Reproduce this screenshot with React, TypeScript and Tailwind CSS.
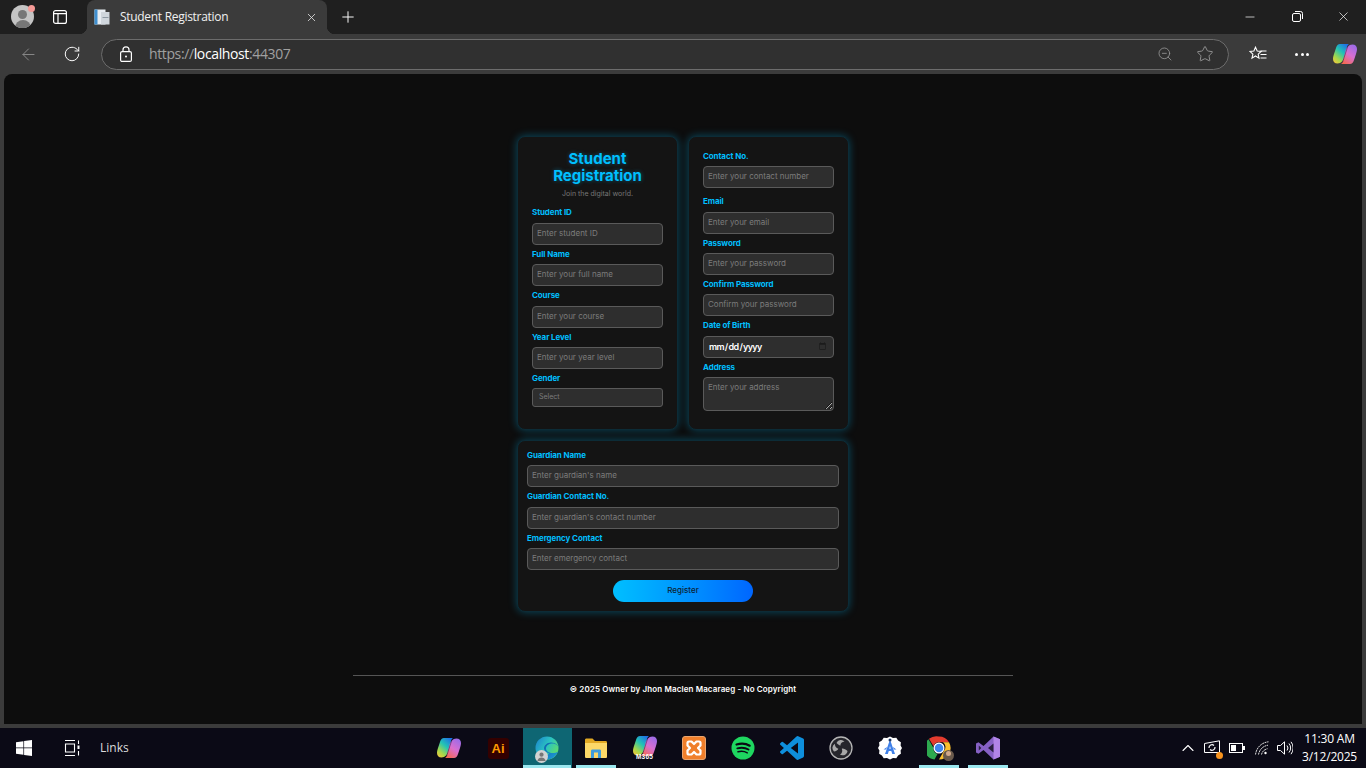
import React from "react";
import { ArrowLeft, RotateCw, ZoomOut, Star, Plus, X, Minus, ChevronUp } from "lucide-react";

const inputCls =
  "block w-full h-[22px] rounded-[4px] border border-[#5a5a5a] bg-[#2e2e2e] px-[4px] pb-[2px] text-[8px] text-white outline-none placeholder:text-[#7c7c7c]";

function Field({ label, placeholder, wrap, labelCls, children }: { label: string; placeholder?: string; wrap: string; labelCls: string; children?: React.ReactNode }) {
  return (
    <div className={wrap}>
      <div className={"h-[10px] text-[8px] leading-[10px] font-bold tracking-[-0.1px] text-[#00bfff] " + labelCls}>{label}</div>
      {children ?? <input className={inputCls} placeholder={placeholder} readOnly />}
    </div>
  );
}

function Copilot({ id, size = 24 }: { id: string; size?: number }) {
  return (
    <svg width={size} height={size} viewBox="0 0 24 24">
      <defs>
        <linearGradient id={id + "a"} x1="0.8" y1="0" x2="0.1" y2="1">
          <stop offset="0" stopColor="#1f6fe8" />
          <stop offset="0.4" stopColor="#22c3b5" />
          <stop offset="0.75" stopColor="#a6d84a" />
          <stop offset="1" stopColor="#f5c73c" />
        </linearGradient>
        <linearGradient id={id + "b"} x1="0.8" y1="0" x2="0.2" y2="1">
          <stop offset="0" stopColor="#9a6be8" />
          <stop offset="0.5" stopColor="#d96fd0" />
          <stop offset="1" stopColor="#f5694f" />
        </linearGradient>
      </defs>
      <path d="M7 2h9c-1 .5-1.500 1.500-1.900 3L11.500 15c-.9 3.500-3.300 6.500-6.800 6.500C1.500 21.500 0 19.500 0 17c0-1.500.5-3.500 1-5l2-6c.8-2.500 2-4 4-4Z" fill={`url(#${id}a)`} />
      <path d="M17 22H8c1-.5 1.500-1.500 1.900-3L12.500 9c.9-3.500 3.300-6.500 6.800-6.500C22.500 2.500 24 4.500 24 7c0 1.500-.5 3.500-1 5l-2 6c-.8 2.500-2 4-4 4Z" fill={`url(#${id}b)`} />
      <path d="M15 3.500 9.500 20.500" stroke="#1a1030" strokeOpacity="0.45" strokeWidth="1" />
    </svg>
  );
}

function Tile({ active, open, children }: { active?: boolean; open?: boolean; children: React.ReactNode }) {
  return (
    <div className={"relative flex h-[40px] w-[49px] items-center justify-center " + (active ? "bg-[#0e6673]" : "")}>
      {children}
      {(active || open) && <div className={"absolute bottom-0 h-[3px] bg-[#9be7ef] " + (active ? "left-[0.5px] right-[0.5px]" : "left-[4.5px] right-[4.5px]")} />}
    </div>
  );
}

function Edge() {
  return (
    <div className="relative h-[24px] w-[24px]">
      <svg width="24" height="24" viewBox="0 0 24 24">
        <defs>
          <linearGradient id="edgeA" x1="0" y1="0" x2="1" y2="0.6">
            <stop offset="0" stopColor="#1b7fcf" />
            <stop offset="0.55" stopColor="#2bc4c0" />
            <stop offset="1" stopColor="#5fdc6c" />
          </linearGradient>
          <linearGradient id="edgeB" x1="0" y1="0" x2="1" y2="1">
            <stop offset="0" stopColor="#0c59a4" />
            <stop offset="1" stopColor="#1b9de2" />
          </linearGradient>
        </defs>
        <circle cx="12" cy="12" r="11.500" fill="url(#edgeA)" />
        <path d="M24 13c0-3-3-5.500-6.500-5.500-3.500 0-6.500 2-6.500 5 0 3 3.500 4.500 6.500 4.500 2 0 4-.5 5.500-1.500C21 20.500 17 23.500 12 23.500c-3 0-5-1-6-3 4 0 7-1 8-3-3-1-5-3-5-5 0-3 3-6 7-6 5 0 8 3 8 6.500Z" fill="url(#edgeB)" opacity="0.95" />
      </svg>
      <div className="absolute bottom-[-3px] left-[0px] flex h-[13px] w-[13px] items-center justify-center rounded-full bg-[#d2d2d2]">
        <svg width="11" height="11" viewBox="0 0 12 12"><circle cx="6" cy="4" r="2.300" fill="#777" /><path d="M1.500 11c.5-3 2.500-4 4.500-4s4 1 4.500 4Z" fill="#777" /></svg>
      </div>
    </div>
  );
}

function Taskbar() {
  return (
    <div className="flex h-[40px] items-center bg-[#0b0a16] text-white">
      <div className="flex w-[424.5px] shrink-0 items-center pl-[16px]">
        <svg width="16" height="16" viewBox="0 0 16 16" fill="#fff">
          <path d="M0 2.300 7.400 1.200v6.400H0ZM8.100 1.100 16 0v7.600H8.100ZM0 8.300h7.400v6.500L0 13.700ZM8.100 8.300H16V16l-7.900-1.100Z" />
        </svg>
        <svg className="ml-[32px]" width="16" height="16" viewBox="0 0 16 16" fill="none" stroke="#fff" strokeWidth="1.100">
          <path d="M1 .5h10M1 15.500h10M1.500 4h9v8h-9ZM14.500.5v3.500M14.500 11v4.500" />
          <rect x="13.500" y="5.500" width="2" height="3.500" fill="#fff" stroke="none" />
        </svg>
        <span className="ml-[20px] font-['Open_Sans',sans-serif] text-[12px] text-[#dcdcdc]">Links</span>
      </div>
      <div className="flex">
        <Tile><Copilot id="c1" /></Tile>
        <Tile>
          <div className="flex h-[21px] w-[21px] items-center justify-center rounded-[3px] bg-[#330000] font-['Liberation_Sans',sans-serif] text-[13px] leading-none font-bold text-[#ff9a00]">Ai</div>
        </Tile>
        <Tile active><Edge /></Tile>
        <Tile open>
          <svg width="22" height="20" viewBox="0 0 22 20">
            <path d="M0 2c0-1 .6-1.500 1.500-1.500h6L10 3h10.500c1 0 1.500.5 1.500 1.500V6H0Z" fill="#e2a924" />
            <path d="M0 5h22v13.500c0 1-.5 1.500-1.500 1.500h-19C.5 20 0 19.500 0 18.500Z" fill="#fcd868" />
            <path d="M6 20v-7c0-1 .6-1.500 1.500-1.500h7c1 0 1.500.5 1.500 1.500v7h-3v-5.500H9V20Z" fill="#3f9ddc" />
          </svg>
        </Tile>
        <Tile>
          <div className="relative -mt-[5px]">
            <Copilot id="c2" />
            <div className="absolute top-[19px] left-[3px] font-['Liberation_Sans',sans-serif] text-[6.500px] leading-[8px] font-bold tracking-[0.2px] text-white">M365</div>
          </div>
        </Tile>
        <Tile>
          <div className="flex h-[24px] w-[24px] items-center justify-center rounded-[3px] border border-[#e9a46d] bg-[#f07f2b]">
            <svg width="18" height="18" viewBox="0 0 18 18" fill="none" stroke="#fff" strokeWidth="2.200" strokeLinejoin="round">
              <path d="M4 2.500h2.500L9 5l2.500-2.500H14c1 0 1.500.5 1.500 1.500v2.500L13 9l2.500 2.500V14c0 1-.5 1.500-1.500 1.500h-2.500L9 13l-2.500 2.500H4c-1 0-1.500-.5-1.500-1.500v-2.500L5 9 2.500 6.500V4c0-1 .5-1.500 1.500-1.500Z" />
            </svg>
          </div>
        </Tile>
        <Tile>
          <svg width="24" height="24" viewBox="0 0 24 24">
            <circle cx="12" cy="12" r="11.500" fill="#1ed760" />
            <g fill="none" stroke="#0a0913" strokeLinecap="round">
              <path d="M5.500 8.500c4.500-1.300 9.500-1 13.200 1.200" strokeWidth="2.200" />
              <path d="M6.300 12.300c4-1 8-.7 11.200 1.200" strokeWidth="1.900" />
              <path d="M7 15.800c3.300-.8 6.500-.5 9.300 1" strokeWidth="1.500" />
            </g>
          </svg>
        </Tile>
        <Tile>
          <svg width="24" height="24" viewBox="0 0 24 24">
            <path d="M23.150 2.587 18.210.21a1.494 1.494 0 0 0-1.705.29l-9.460 8.630-4.120-3.128a.999.999 0 0 0-1.276.057L.327 7.261A1 1 0 0 0 .326 8.740L3.899 12 .326 15.260a1 1 0 0 0 .001 1.479L1.650 17.940a.999.999 0 0 0 1.276.057l4.120-3.128 9.460 8.630a1.492 1.492 0 0 0 1.704.29l4.942-2.377A1.500 1.500 0 0 0 24 20.060V3.939a1.500 1.500 0 0 0-.85-1.352zm-5.146 14.861L10.826 12l7.178-5.448v10.896z" fill="#0e8fdc" />
          </svg>
        </Tile>
        <Tile>
          <svg width="24" height="24" viewBox="0 0 24 24">
            <circle cx="12" cy="12" r="11" fill="#26262c" stroke="#b5b5b5" strokeWidth="1.300" />
            <g fill="#a8a8a8">
              <path d="M7.500 7a4.800 4.800 0 0 1 8-1.500 4.800 4.800 0 0 0-4.200 4.300C10 9 8.500 8 7.500 7Z" />
              <path d="M18.500 15a4.800 4.800 0 0 1-7.500 3.500 4.800 4.800 0 0 0 1.800-5.800c1.500-.5 4 .8 5.700 2.300Z" />
              <path d="M5 15.500a4.800 4.800 0 0 1 1-7.800 4.800 4.800 0 0 0 3.300 5c-.2 1.500-2.500 2.500-4.300 2.800Z" />
            </g>
          </svg>
        </Tile>
        <Tile>
          <svg width="24" height="24" viewBox="0 0 24 24">
            <path d="M12 .5l3 1.600 3.300-.3 1.800 2.700 2.800 1.800-.3 3.200L24 12l-1.400 2.500.3 3.200-2.800 1.800-1.800 2.700-3.300-.3-3 1.600-3-1.600-3.300.3-1.800-2.700-2.800-1.800.3-3.200L0 12l1.400-2.500-.3-3.200 2.800-1.800 1.800-2.700 3.300.3Z" fill="#fff" />
            <path d="M12 3.500 7 18h2.800l1-3h2.500l1 3H17ZM11.300 12.800 12 10l.8 2.800Z" fill="#3f80e8" />
            <path d="M5.500 13.500 9 11l-.8 2.500ZM18.500 13.500 15 11l.8 2.500Z" fill="#3f80e8" />
            <circle cx="12" cy="4" r="1.500" fill="#1f3a68" />
          </svg>
        </Tile>
        <Tile open>
          <div className="relative h-[24px] w-[24px]">
            <svg width="24" height="24" viewBox="0 0 48 48">
              <path d="M24 1a23 23 0 0 1 20 11.500H24a11.500 11.500 0 0 0-11 8L4 5.700A23 23 0 0 1 24 1Z" fill="#e33b2e" />
              <path d="M4 5.700 14 23a11.500 11.500 0 0 0 8 12L16 46A23 23 0 0 1 4 5.700Z" fill="#2da94f" transform="translate(-1 1)" />
              <path d="M44 12.500A23 23 0 0 1 24 47l10-17.500a11.500 11.500 0 0 0-2-17Z" fill="#fbc02d" />
              <circle cx="24" cy="24" r="11" fill="#fff" />
              <circle cx="24" cy="24" r="8.500" fill="#3f86f0" />
            </svg>
            <div className="absolute right-[-3px] bottom-[-1px] h-[11px] w-[11px] rounded-full bg-[#6a5a4c]">
              <div className="mx-auto mt-[1px] h-[5px] w-[5px] rounded-full bg-[#d2a98a]" />
            </div>
          </div>
        </Tile>
        <Tile open>
          <svg width="24" height="24" viewBox="0 0 24 24">
            <path d="M17.500.5 24 3.300v17.400l-6.500 2.800L7.500 14l-5 3.800L0 16.500v-9L2.500 6.200l5 3.800Z" fill="#8661c5" />
            <path d="M17.500.5 24 3.300v17.400l-6.500 2.800Z" fill="#b184e8" />
            <path d="M17.500 7.500 12 12l5.500 4.500ZM2.800 9.500v5L5.300 12Z" fill="#0a0913" opacity="0.75" />
          </svg>
        </Tile>
      </div>
      <div className="ml-auto flex items-center pr-[9px]">
        <ChevronUp size={20} strokeWidth={1.300} className="text-white" />
        <div className="relative ml-[6px] h-[16px] w-[16px]">
          <svg width="16" height="16" viewBox="0 0 16 16" fill="none" stroke="#fff" strokeWidth="1">
            <path d="M.5 3.500 15.500.8v11.700H.5Z" />
            <path d="M5 8a3 3 0 0 1 5-2.500M11 7a3 3 0 0 1-5 2.500" strokeWidth="1.200" />
          </svg>
          <div className="absolute right-[-3px] bottom-[-3px] h-[7px] w-[7px] rounded-full bg-[#f7931e]" />
        </div>
        <svg className="ml-[9px]" width="16" height="10" viewBox="0 0 16 10" fill="none" stroke="#fff">
          <rect x=".5" y=".5" width="13" height="9" />
          <rect x="2" y="2" width="5" height="6" fill="#fff" stroke="none" />
          <rect x="14" y="3" width="2" height="4" fill="#fff" stroke="none" />
        </svg>
        <svg className="ml-[10px]" width="15" height="14" viewBox="0 0 15 14" fill="none" stroke="#ddd">
          <path d="M.5 13.500C1.500 6.500 6.500 1.500 13.500.8M3.500 13.500C4.500 8.500 8 5 13 4.200M6.500 13.500c.7-3 2.700-5 6-5.800" strokeDasharray="2 .6" />
          <circle cx="10.500" cy="12" r="1.200" fill="#fff" stroke="none" />
        </svg>
        <svg className="ml-[7px]" width="16" height="14" viewBox="0 0 16 14" fill="none" stroke="#fff">
          <path d="M.5 4.500h3L7.500.8v12.400L3.500 9.500h-3Z" />
          <path d="M10 4.500a4 4 0 0 1 0 5M12 2.500a7 7 0 0 1 0 9M14 .8a10 10 0 0 1 0 12.400" />
        </svg>
        <div className="ml-[9px] w-[55px] text-center font-['Open_Sans',sans-serif] text-[12px] leading-[18px] tracking-[-0.2px] text-white">
          <div>11:30 AM</div>
          <div>3/12/2025</div>
        </div>
      </div>
    </div>
  );
}

function BrowserChrome() {
  return (
    <>
      <div className="flex h-[34px] bg-[#1f1f1f] font-['Open_Sans',sans-serif] text-white">
        <div className="relative ml-[11px] mt-[5px] h-[23px] w-[23px] overflow-hidden rounded-full bg-[#c4c4c4]">
          <div className="mx-auto mt-[5px] h-[9px] w-[9px] rounded-full bg-[#777]" />
          <div className="mx-auto mt-[1px] h-[10px] w-[16px] rounded-t-full bg-[#777]" />
        </div>
        <div className="relative -ml-[6px] mt-[5px] h-[7px] w-[7px] rounded-full bg-[#f59a96]" />
        <svg className="ml-[18px] mt-[10px]" width="14" height="14" viewBox="0 0 14 14" fill="none" stroke="#fff" strokeWidth="1.200">
          <rect x=".6" y=".6" width="12.800" height="12.800" rx="2" />
          <path d="M1 3.600h12M5 3.600V13" />
        </svg>
        <div className="relative ml-[20px] flex h-[34px] w-[240px] items-center rounded-t-[8px] bg-[#3b3b3b]">
          <div className="absolute bottom-0 -left-[8px] h-[8px] w-[8px] bg-[radial-gradient(circle_at_0_0,transparent_8px,#3b3b3b_8.5px)]" />
          <div className="absolute -right-[8px] bottom-0 h-[8px] w-[8px] bg-[radial-gradient(circle_at_100%_0,transparent_8px,#3b3b3b_8.5px)]" />
          <svg className="ml-[7px]" width="16" height="16" viewBox="0 0 16 16">
            <rect x="0.500" y="0.500" width="11" height="15" fill="#e8edf2" />
            <rect x="0.500" y="0.500" width="3" height="15" fill="#3f8fd0" />
            <rect x="7" y="3" width="8.500" height="12.500" fill="#cfd6dc" />
            <rect x="8.500" y="8" width="6" height="1" fill="#8c98a3" />
          </svg>
          <span className="ml-[10px] text-[12px] tracking-[-0.3px] text-[#f0f0f0]">Student Registration</span>
          <X size={13} strokeWidth={1.500} className="ml-auto mr-[9px] text-[#e4e4e4]" />
        </div>
        <Plus size={18} strokeWidth={1.300} className="ml-[12px] mt-[8px] text-white" />
        <div className="ml-auto flex">
          <Minus size={14} strokeWidth={1.200} className="mr-[35px] mt-[10px] text-white" />
          <svg className="mr-[33px] mt-[11px]" width="11" height="11" viewBox="0 0 11 11" fill="none" stroke="#fff">
            <rect x=".5" y="2.500" width="8" height="8" rx="1.500" />
            <path d="M3 .5h5.500a2 2 0 0 1 2 2V8" />
          </svg>
          <X size={15} strokeWidth={1.100} className="mr-[15px] mt-[9px] text-white" />
        </div>
      </div>
      <div className="flex h-[40px] items-center bg-[#3b3b3b] font-['Open_Sans',sans-serif]">
        <ArrowLeft size={19} strokeWidth={1.200} className="ml-[19px] text-[#8a8a8a]" />
        <RotateCw size={18} strokeWidth={1.300} className="ml-[25px] text-white" />
        <div className="ml-[20px] flex h-[31px] w-[1128px] items-center rounded-full border border-[#6c6c6c] bg-[#303030]">
          <svg className="ml-[17px]" width="14" height="16" viewBox="0 0 14 16" fill="none" stroke="#fff" strokeWidth="1.200">
            <rect x="1.600" y="5.600" width="10.800" height="9.800" rx="1.500" />
            <path d="M4 5.500V3.800a3 3 0 0 1 6 0v1.700" />
            <circle cx="7" cy="10.500" r="1" fill="#fff" stroke="none" />
          </svg>
          <span className="ml-[16px] -mt-[2px] text-[14px] tracking-[-0.38px] text-[#a0a0a0]">
            https://<span className="text-white">localhost</span>:44307
          </span>
          <ZoomOut size={16} strokeWidth={1.200} className="ml-auto text-[#9a9a9a]" />
          <Star size={18} strokeWidth={1.200} className="ml-[23px] mr-[14px] text-[#9a9a9a]" />
        </div>
        <svg className="ml-[20px]" width="18" height="17" viewBox="0 0 18 17" fill="none" stroke="#fff" strokeWidth="1.100">
          <path d="M6.500 1.200 8.200 5l4 .4-3 2.700.8 4-3.500-2.100L3 12.100l.9-4-3-2.700 4-.4Z" />
          <path d="M11.500 5h6M11.500 8.500h6M11.500 12h6" />
        </svg>
        <div className="ml-[28px] flex gap-[2.500px]">
          <div className="h-[3px] w-[3px] rounded-full bg-white" />
          <div className="h-[3px] w-[3px] rounded-full bg-white" />
          <div className="h-[3px] w-[3px] rounded-full bg-white" />
        </div>
        <div className="ml-[24px]"><Copilot id="c3" /></div>
      </div>
    </>
  );
}

function Form() {
  const card =
    "rounded-[8px] border border-[#0c2c37] bg-[#141414] shadow-[0_0_9px_rgba(0,191,255,0.35)]";
  return (
    <div className="mx-auto mt-[62px] grid w-[332px] grid-cols-2 gap-[10px]">
      <div className={card + " px-[14px] pt-[13px] pb-[22px]"}>
        <h1 className="text-center text-[15px] leading-[17px] font-bold text-[#00bfff] [text-shadow:0_0_4px_rgba(0,191,255,0.4)]">
          Student Registration
        </h1>
        <p className="mt-[5px] h-[10px] text-center text-[7px] leading-[10px] text-[#777]">Join the digital world.</p>
        <Field wrap="mt-[8px]" labelCls="mb-[6px]" label="Student ID" placeholder="Enter student ID" />
        <Field wrap="mt-[4px]" labelCls="mb-[5px]" label="Full Name" placeholder="Enter your full name" />
        <Field wrap="mt-[4px]" labelCls="mb-[6px]" label="Course" placeholder="Enter your course" />
        <Field wrap="mt-[4px]" labelCls="mb-[5px]" label="Year Level" placeholder="Enter your year level" />
        <Field wrap="mt-[4px]" labelCls="mb-[5px]" label="Gender">
          <select className="block h-[19px] w-full appearance-none rounded-[3px] border border-[#5a5a5a] bg-[#2e2e2e] px-[6px] text-[7px] text-[#7c7c7c] outline-none">
            <option>Select</option>
          </select>
        </Field>
      </div>
      <div className={card + " px-[14px] pt-[14px] pb-[18px]"}>
        <Field wrap="" labelCls="mb-[5px]" label="Contact No." placeholder="Enter your contact number" />
        <Field wrap="mt-[8px]" labelCls="mb-[6px]" label="Email" placeholder="Enter your email" />
        <Field wrap="mt-[4px]" labelCls="mb-[5px]" label="Password" placeholder="Enter your password" />
        <Field wrap="mt-[4px]" labelCls="mb-[5px]" label="Confirm Password" placeholder="Confirm your password" />
        <Field wrap="mt-[4px]" labelCls="mb-[6px]" label="Date of Birth">
          <input type="date" className="block h-[22px] w-full rounded-[4px] border border-[#5a5a5a] bg-[#2e2e2e] px-[4px] pb-[1px] text-[9px] font-semibold tracking-[-0.7px] text-white outline-none [&::-webkit-calendar-picker-indicator]:opacity-40" />
        </Field>
        <Field wrap="mt-[4px]" labelCls="mb-[5px]" label="Address">
          <textarea
            readOnly
            placeholder="Enter your address"
            className="block h-[34px] w-full rounded-[4px] border border-[#5a5a5a] bg-[#2e2e2e] px-[4px] py-[3px] text-[8px] leading-[12px] text-white outline-none placeholder:text-[#7c7c7c]"
          />
        </Field>
      </div>
      <div className={card + " col-span-2 px-[9px] pt-[9px] pb-[9px]"}>
        <Field wrap="" labelCls="mb-[5px]" label="Guardian Name" placeholder="Enter guardian's name" />
        <Field wrap="mt-[4px]" labelCls="mb-[6px]" label="Guardian Contact No." placeholder="Enter guardian's contact number" />
        <Field wrap="mt-[4px]" labelCls="mb-[5px]" label="Emergency Contact" placeholder="Enter emergency contact" />
        <button className="mx-auto mt-[10px] block h-[22px] w-[140px] rounded-full bg-gradient-to-r from-[#00bfff] to-[#0066ff] pb-[2px] text-[8px] font-medium text-[#0c2233]">
          Register
        </button>
      </div>
    </div>
  );
}

export default function App() {
  return (
    <div className="flex h-[768px] w-[1366px] flex-col overflow-hidden bg-[#3b3b3b] font-['Inter',sans-serif]">
      <BrowserChrome />
      <main className="mx-[4px] flex h-[650px] flex-col rounded-t-[8px] bg-[#0d0d0d]">
        <Form />
        <div className="mx-auto mt-[63px] w-[660px] border-t border-[#555]" />
        <p className="mt-[8px] h-[10px] text-center text-[8px] leading-[10px] font-semibold tracking-[0.12px] text-white">
          © 2025 Owner by Jhon Maclen Macaraeg - No Copyright
        </p>
      </main>
      <div className="h-[4px]" />
      <Taskbar />
    </div>
  );
}
